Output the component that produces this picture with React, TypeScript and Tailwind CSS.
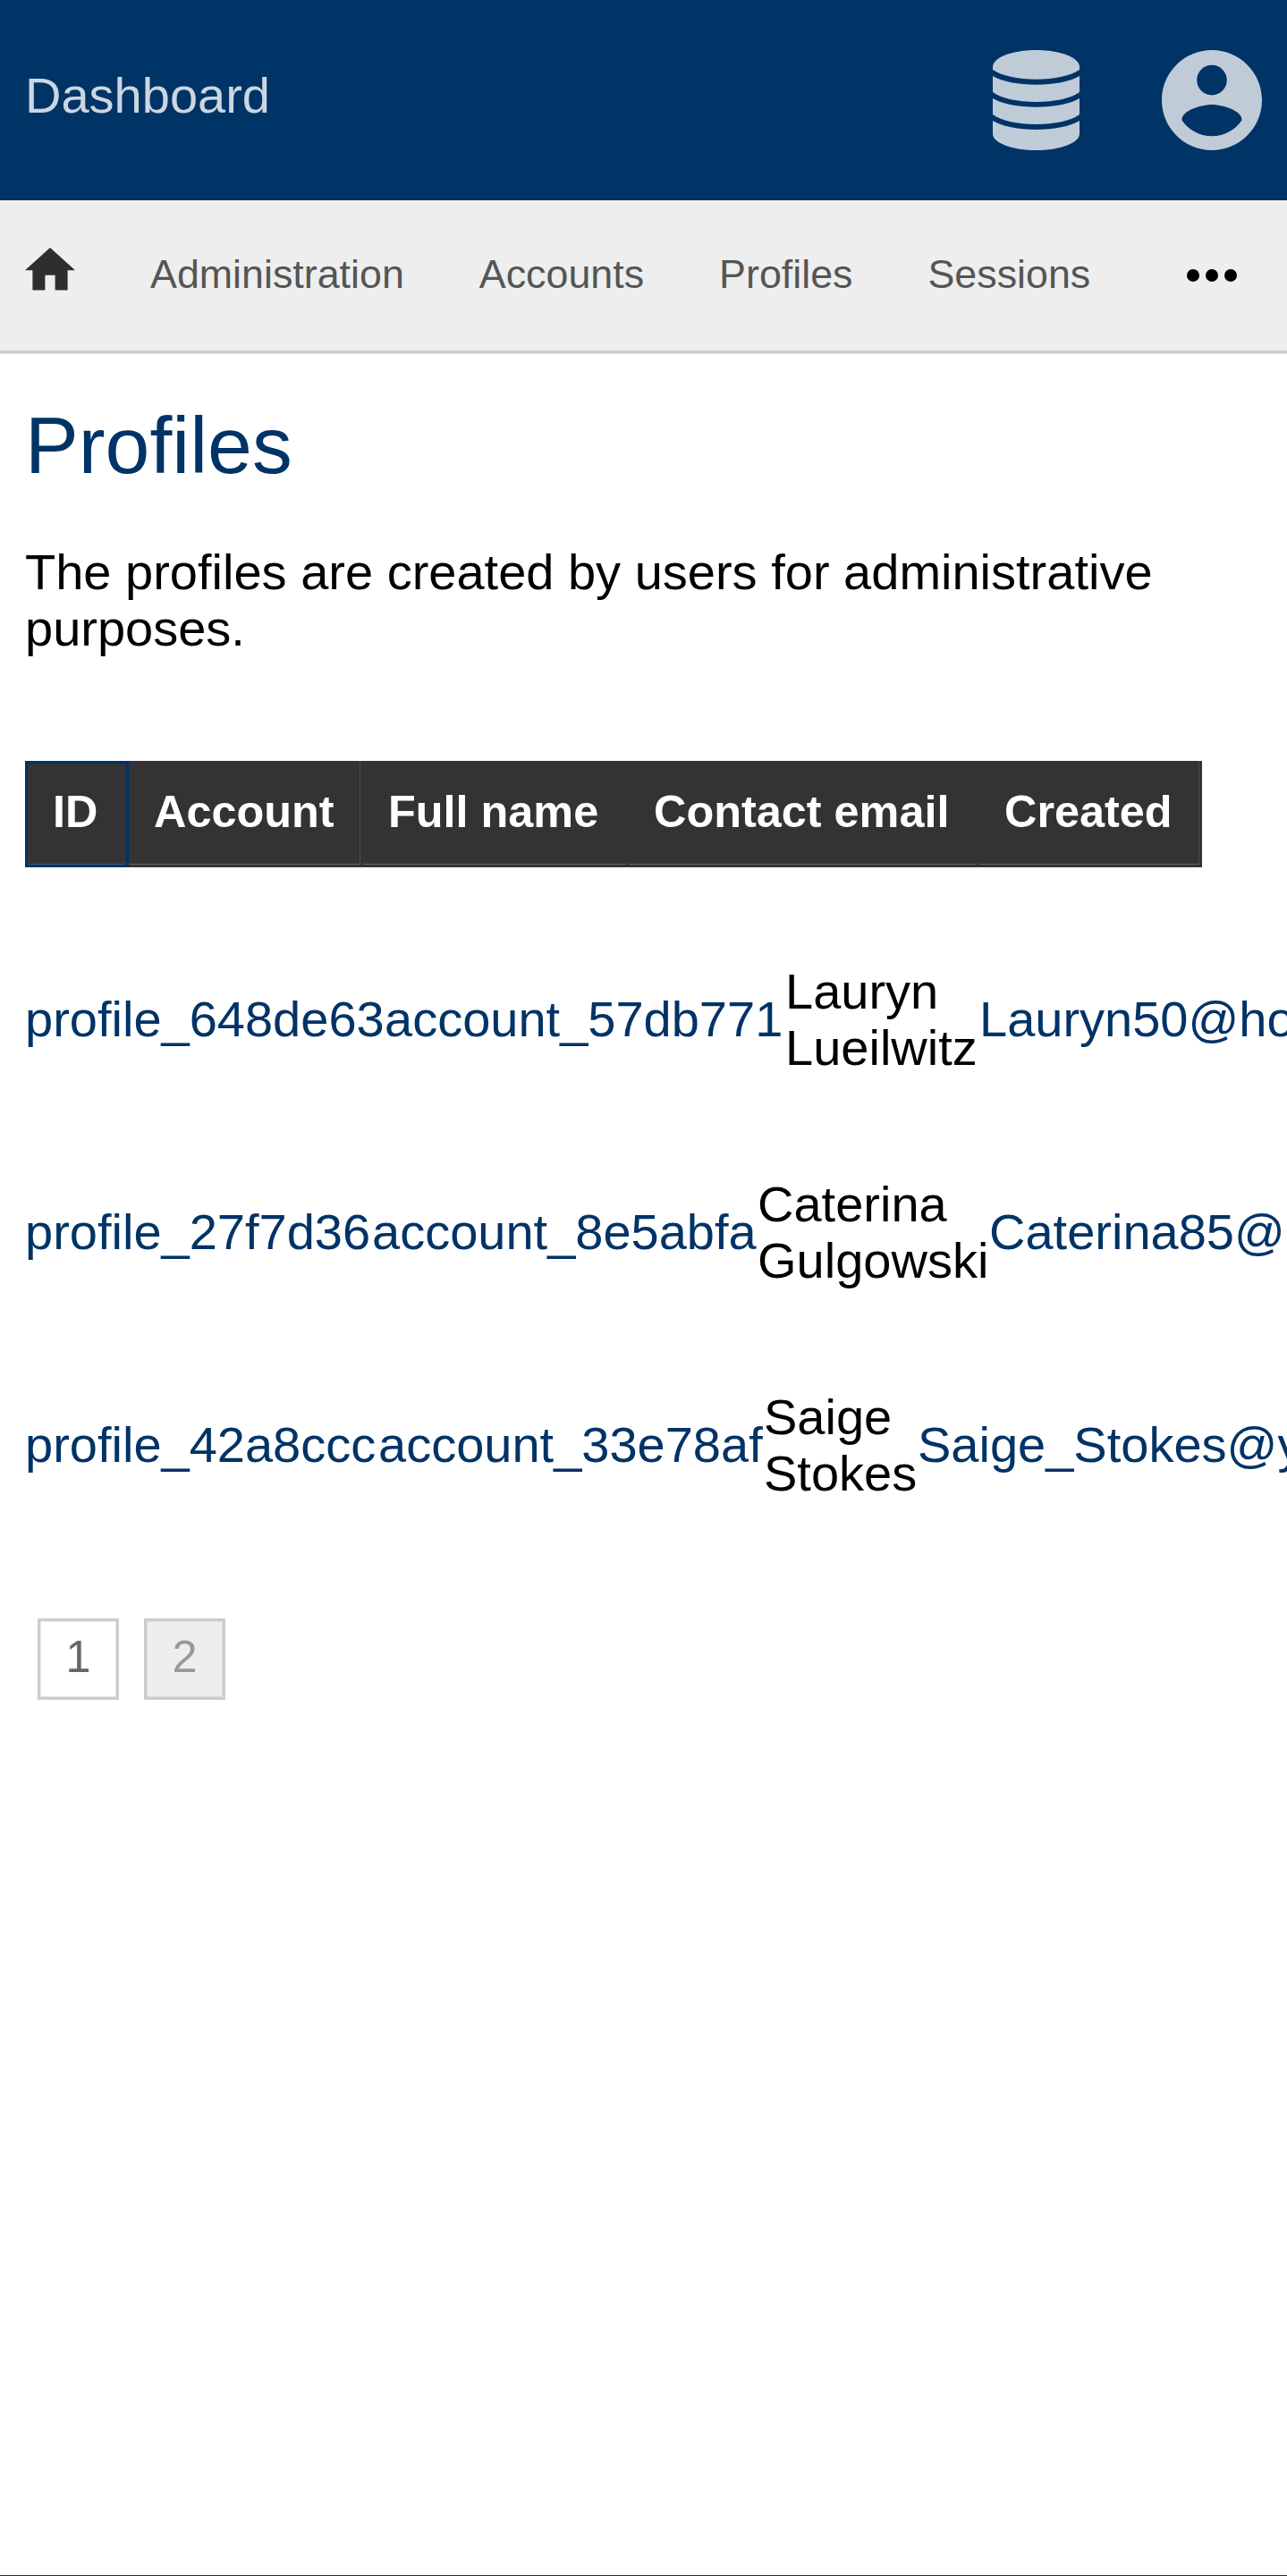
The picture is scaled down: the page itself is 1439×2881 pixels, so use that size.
const navItems = ['Administration', 'Accounts', 'Profiles', 'Sessions'];

const rows = [
  {
    id: 'profile_648de63', idWidth: 'w-[402px]',
    account: 'account_57db771', accountWidth: 'w-[448px]',
    first: 'Lauryn', last: 'Lueilwitz', nameWidth: 'w-[217px]',
    email: 'Lauryn50@hotmail.com',
  },
  {
    id: 'profile_27f7d36', idWidth: 'w-[388px]',
    account: 'account_8e5abfa', accountWidth: 'w-[431px]',
    first: 'Caterina', last: 'Gulgowski', nameWidth: 'w-[259px]',
    email: 'Caterina85@hotmail.com',
  },
  {
    id: 'profile_42a8ccc', idWidth: 'w-[395px]',
    account: 'account_33e78af', accountWidth: 'w-[431px]',
    first: 'Saige', last: 'Stokes', nameWidth: 'w-[172px]',
    email: 'Saige_Stokes@yahoo.com',
  },
];

const columns = [
  { label: 'Account', width: 'w-[262px]', edge: 'border-r-[#4d4d4d]' },
  { label: 'Full name', width: 'w-[297px]', edge: 'border-r-[#363636]' },
  { label: 'Contact email', width: 'w-[392px]', edge: 'border-r-[#363636]' },
  { label: 'Created', width: 'w-[249px]', edge: 'border-r-[#4d4d4d]' },
];

function DatabaseIcon() {
  return (
    <svg className="h-[112px] w-[97px]" viewBox="0 0 290 336" preserveAspectRatio="none" fill="currentColor">
      <path d="M0 57C0 25 65 0 145 0S290 25 290 57V66C262 86 207 98 145 98S28 86 0 66Z" />
      <path d="M0 87C32 106 85 116 145 116S258 106 290 87V141C262 162 207 174 145 174S28 162 0 141Z" />
      <path d="M0 162C32 181 85 191 145 191S258 181 290 162V216C262 237 207 249 145 249S28 237 0 216Z" />
      <path d="M0 237C32 256 85 267 145 267S258 256 290 237V281C290 311 225 336 145 336S0 311 0 281Z" />
    </svg>
  );
}

function AccountIcon() {
  return (
    <svg className="size-[112px]" viewBox="2 2 20 20" fill="currentColor">
      <path d="M12 2C6.48 2 2 6.48 2 12s4.48 10 10 10 10-4.48 10-10S17.52 2 12 2zm0 3c1.66 0 3 1.34 3 3s-1.34 3-3 3-3-1.34-3-3 1.34-3 3-3zm0 14.2c-2.5 0-4.71-1.28-6-3.22.03-1.99 4-3.08 6-3.08 1.99 0 5.97 1.09 6 3.08-1.29 1.94-3.5 3.22-6 3.22z" />
    </svg>
  );
}

export default function App() {
  return (
    <div className="flex h-[2881px] w-[1439px] flex-col overflow-hidden bg-white font-['Liberation_Sans',Arial,sans-serif] text-[56px] leading-[63px] text-black">
      <header className="flex h-[224px] shrink-0 items-center justify-between bg-[#003366] pr-[28px] pl-[28px]">
        <span className="mb-[11px] text-[#ccd6e0]">Dashboard</span>
        <div className="flex items-center gap-[92px] text-[#bfccd8]">
          <DatabaseIcon />
          <AccountIcon />
        </div>
      </header>

      <nav className="flex h-[171px] shrink-0 items-center border-b-[3px] border-[#cccccc] bg-[#eeeeee] pl-[28px] text-[44.8px] leading-[50px] text-[#555555] shadow-[0_1px_0_#e6e6e6]">
        <svg className="mb-[14px] h-[47.6px] w-[56px] text-[#2e2e2e]" viewBox="2 3 20 17" fill="currentColor">
          <path d="M10 20v-6h4v6h5v-8h3L12 3 2 12h3v8z" />
        </svg>
        <div className="mb-[5px] ml-[84px] flex gap-[84px]">
          {navItems.map((item) => (
            <a key={item}>{item}</a>
          ))}
        </div>
        <svg className="mr-[56px] ml-auto h-[14px] w-[56px] text-black" viewBox="0 0 16 4" fill="currentColor">
          <circle cx="2" cy="2" r="2" />
          <circle cx="8" cy="2" r="2" />
          <circle cx="14" cy="2" r="2" />
        </svg>
      </nav>

      <main className="flex grow flex-col pl-[28px]">
        <h1 className="mt-[52px] text-[89.6px] leading-[102px] text-[#003366]">Profiles</h1>
        <p className="mt-[59px] w-[1383px]">The profiles are created by users for administrative purposes.</p>

        <div className="mt-[117px] flex h-[119px] w-[1316px] text-[50.4px] leading-[56px] font-bold text-white">
          <div className="flex w-[116px] border-[3px] border-[#003366] bg-[#333333]">
            <div className="grow border-b border-[#3d556d] pt-[26px] pl-[28px]">ID</div>
          </div>
          {columns.map((column) => (
            <div key={column.label} className={`bg-[#333333] pr-[3px] pb-[3px] ${column.width}`}>
              <div className={`h-full border-r border-b border-b-[#666666] pt-[29px] pl-[28px] whitespace-nowrap ${column.edge}`}>
                {column.label}
              </div>
            </div>
          ))}
        </div>

        <div className="mt-[107px] flex flex-col gap-[112px]">
          {rows.map((row) => (
            <div key={row.id} className="flex items-center whitespace-nowrap text-[#003366]">
              <a className={`mb-[2px] shrink-0 ${row.idWidth}`}>{row.id}</a>
              <a className={`mb-[2px] shrink-0 ${row.accountWidth}`}>{row.account}</a>
              <span className={`shrink-0 text-black ${row.nameWidth}`}>
                {row.first}
                <br />
                {row.last}
              </span>
              <a className="mb-[2px] shrink-0">{row.email}</a>
            </div>
          ))}
        </div>

        <div className="mt-[131px] ml-[14px] flex gap-[28px] text-[50.4px] leading-[56px]">
          <span className="flex size-[91px] justify-center border-[3px] border-[#cccccc] pt-[12px] text-[#666666] shadow-[inset_0_0_0_1px_#e6e6e6]">1</span>
          <span className="flex size-[91px] justify-center border-[3px] border-[#cccccc] bg-[#eeeeee] pt-[12px] text-[#999999] shadow-[inset_0_0_0_1px_#dddddd]">2</span>
        </div>
      </main>

      <div className="h-px shrink-0 bg-[#003366]" />
    </div>
  );
}
